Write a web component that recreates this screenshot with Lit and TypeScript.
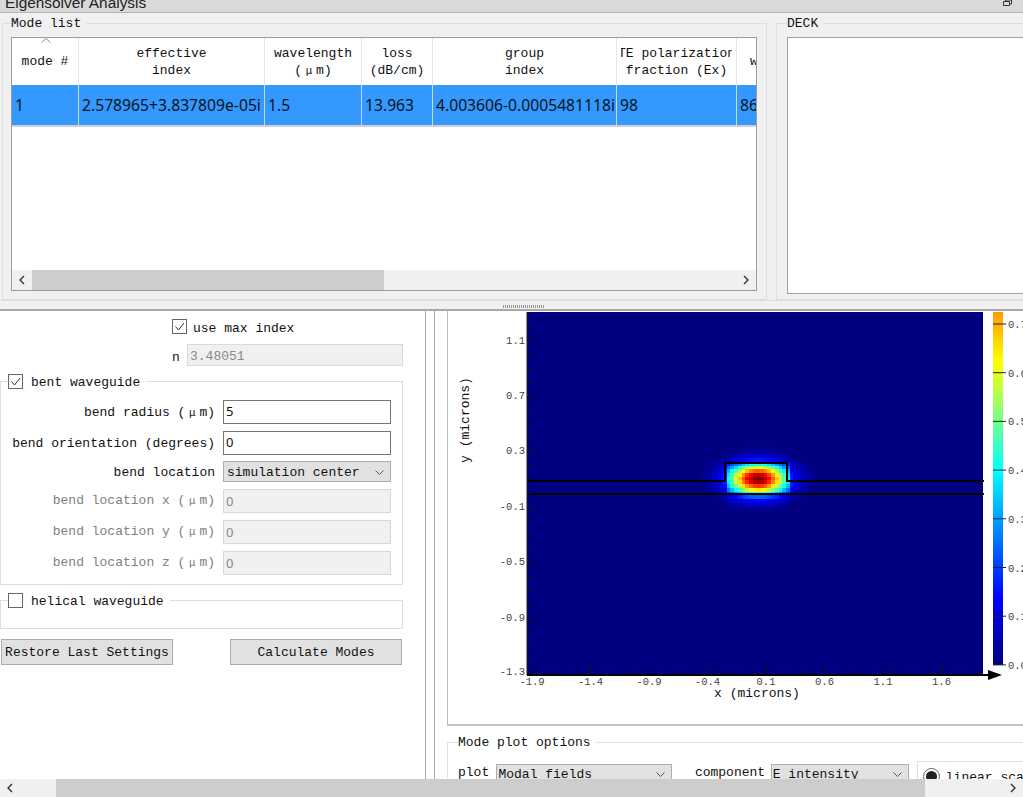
import { LitElement, html, svg, css } from 'lit';
import { customElement } from 'lit/decorators.js';

const COLUMNS = [
  { width: 67, head: ['mode #'], value: '1' },
  { width: 186, head: ['effective', 'index'], value: '2.578965+3.837809e-05i' },
  { width: 97, head: ['wavelength', '(μm)'], value: '1.5' },
  { width: 71, head: ['loss', '(dB/cm)'], value: '13.963' },
  { width: 184, head: ['group', 'index'], value: '4.003606-0.0005481118i' },
  { width: 120, head: ['TE polarization', 'fraction (Ex)'], value: '98' },
  { width: 20, head: ['w'], value: '86' },
];

const mu = html`<span class="mu">μ</span>`;

const check = (on: boolean) => html`<span class="check">
  ${on ? html`<svg width="13" height="13" viewBox="0 0 13 13"><path d="M2.5 6.5 5.5 10 11 3" fill="none" stroke="#333" stroke-width="1"/></svg>` : ''}
</span>`;

const chevron = html`<svg class="chev" width="9" height="5" viewBox="0 0 9 5"><path d="M0.5 0.5 4.5 4.5 8.5 0.5" fill="none" stroke="#555" stroke-width="1"/></svg>`;

const arrowLeft = html`<svg width="6" height="10" viewBox="0 0 6 10"><path d="M5 1 1 5 5 9" fill="none" stroke="#333" stroke-width="1.4"/></svg>`;
const arrowRight = html`<svg width="6" height="10" viewBox="0 0 6 10"><path d="M1 1 5 5 1 9" fill="none" stroke="#333" stroke-width="1.4"/></svg>`;

// standard jet map, v in 0..1
function jet(v: number) {
  const c = (x: number) => Math.round(255 * Math.max(0, Math.min(1, x)));
  const r = c(1.5 - Math.abs(4 * v - 3));
  const g = c(1.5 - Math.abs(4 * v - 2));
  const b = c(1.5 - Math.abs(4 * v - 1));
  return `rgb(${r},${g},${b})`;
}

function field(x: number, y: number) {
  const dx = x - 758;
  const dy = y - 479;
  let v = Math.exp(-(dx * dx) / (30 * 30) - (dy * dy) / (16 * 16));
  if (x < 725 || x > 789) v *= 0.55;
  if (y < 463) v *= 0.6;
  if (y > 494) v *= 0.8;
  return v;
}

function heatCells() {
  const cells = [];
  const size = 3.7;
  for (let y = 436; y < 524; y += size) {
    for (let x = 686; x < 832; x += size) {
      const v = field(x + size / 2, y + size / 2);
      if (v < 0.015) continue;
      cells.push(svg`<rect x=${x} y=${y} width=${size + 0.2} height=${size + 0.2} fill=${jet(v)}/>`);
    }
  }
  return cells;
}

function yAxis() {
  const out = [];
  const labels = ['1.1', '0.7', '0.3', '-0.1', '-0.5', '-0.9', '-1.3'];
  for (let i = -2; i < 27; i++) {
    const y = 341 + i * 13.88;
    if (y < 312 || y > 675) continue;
    const major = i % 4 === 0;
    out.push(svg`<line x1="527" x2=${major ? 536 : 532} y1=${y} y2=${y} stroke="#111"/>`);
  }
  labels.forEach((t, i) => {
    out.push(svg`<text class="tick" x="525" y=${343.5 + i * 55.4 - (i === 6 ? 1 : 0)} text-anchor="end">${t}</text>`);
  });
  return out;
}

function xAxis() {
  const out = [];
  const labels = ['-1.9', '-1.4', '-0.9', '-0.4', '0.1', '0.6', '1.1', '1.6'];
  for (let i = 0; i < 40; i++) {
    const x = 533 + i * 11.7;
    if (x > 980) break;
    out.push(svg`<line x1=${x} x2=${x} y1="675" y2=${i % 5 === 0 ? 667 : 671} stroke="#111"/>`);
  }
  labels.forEach((t, i) => {
    out.push(svg`<text class="tick" x=${532 + i * 58.5} y="685" text-anchor="middle">${t}</text>`);
  });
  return out;
}

function colorBar() {
  const ticks = ['0.7', '0.6', '0.5', '0.4', '0.3', '0.2', '0.1', '0.0'];
  return ticks.map((t, i) => {
    const y = 324 + i * 48.7;
    return svg`<line x1="993" x2="1006" y1=${y} y2=${y} stroke="#222"/>
      <text class="tick" x="1008" y=${y + 4}>${t}</text>`;
  });
}

@customElement('app-root')
export class AppRoot extends LitElement {
  static styles = css`
    :host {
      display: block;
      position: relative;
      width: 1023px;
      height: 797px;
      overflow: hidden;
      background: #f0f0f0;
      color: #111;
      font: 13px/17px 'Liberation Mono', monospace;
    }
    .titlebar {
      height: 12px;
      background: #d9d9d9;
      border-bottom: 1px solid #b4b4b4;
      padding-left: 5px;
      overflow: hidden;
      display: flex;
      justify-content: space-between;
      align-items: flex-end;
    }
    .titlebar span {
      font: 15.4px/16px 'Liberation Sans', sans-serif;
      color: #222;
      margin-bottom: 1px;
    }
    .titlebar svg {
      margin: 0 11px 6px 0;
    }
    .top {
      height: 287px;
      box-sizing: border-box;
      padding: 10px 0 0 2px;
      display: flex;
      gap: 9px;
    }
    .group {
      border: 1px solid #dedede;
      box-sizing: border-box;
    }
    .group-title {
      display: block;
      width: fit-content;
      height: 17px;
      margin: -9px 0 0 0;
      padding-right: 5px;
      background: #f0f0f0;
    }
    .mode-group {
      width: 765px;
      height: 277px;
      padding: 0 9px 0 8px;
    }
    .deck-group {
      flex: 1;
      margin-right: -10px;
      padding-left: 10px;
    }
    .deck-box {
      height: 255px;
      margin-top: 5px;
      background: #fff;
      border: 1px solid #a0a0a0;
    }
    .table {
      height: 254px;
      margin-top: 5px;
      box-sizing: border-box;
      background: #fff;
      border: 1px solid #9c9c9c;
      display: flex;
      flex-direction: column;
      overflow: hidden;
    }
    .thead,
    .trow {
      display: flex;
    }
    .thead {
      height: 47px;
    }
    .th {
      position: relative;
      box-sizing: border-box;
      flex: none;
      border-right: 1px solid #e6e6e6;
      padding: 0 4px;
      display: flex;
      flex-direction: column;
      justify-content: center;
      overflow: hidden;
    }
    .th:last-child {
      border: 0;
      padding: 0;
      align-items: flex-start;
    }
    .th:last-child div {
      margin-left: 13px;
      width: auto;
      overflow: visible;
    }
    .th div {
      display: flex;
      justify-content: center;
      white-space: pre;
      height: 17px;
      overflow: hidden;
    }
    .sort {
      position: absolute;
      left: 29px;
      top: 0;
    }
    .trow {
      height: 42px;
      background: #3399ff;
      border-bottom: 2px solid #d0d0d0;
      box-sizing: border-box;
    }
    .td {
      box-sizing: border-box;
      flex: none;
      padding-left: 3px;
      border-right: 1px solid #c4daf0;
      font: 15.7px/41px 'Noto Sans', sans-serif;
      color: #0a1420;
      white-space: nowrap;
      overflow: hidden;
    }
    .td:last-child {
      border: 0;
    }
    .spacer {
      flex: 1;
    }
    .hscroll {
      flex: none;
      display: flex;
      align-items: center;
      justify-content: space-between;
      background: #f0f0f0;
      position: relative;
    }
    .table .hscroll {
      height: 20px;
      padding: 0 7px;
    }
    .thumb {
      position: absolute;
      top: 0;
      bottom: 0;
      background: #cdcdcd;
    }
    .splitter {
      height: 11px;
      box-sizing: border-box;
      border-bottom: 2px solid #a9a9a9;
      border-top: 1px solid #dedede;
      display: flex;
      justify-content: center;
      padding: 4px 0 0 24px;
    }
    .grip {
      width: 42px;
      height: 3px;
      background: repeating-linear-gradient(90deg, #999 0 1px, transparent 1px 2px);
    }
    .bottom {
      height: 468px;
      display: flex;
      background: #fff;
      overflow: hidden;
    }
    .left {
      width: 426px;
      flex: none;
      box-sizing: border-box;
      padding-top: 8px;
      border-right: 1px solid #a9a9a9;
    }
    .check {
      width: 15px;
      height: 15px;
      box-sizing: border-box;
      border: 1px solid #666;
      background: #fff;
      display: inline-flex;
      flex: none;
    }
    .use-max {
      display: flex;
      align-items: center;
      gap: 6px;
      margin-left: 172px;
      height: 15px;
    }
    .use-max span:last-child {
      margin-top: 4px;
    }
    .n-row {
      display: flex;
      align-items: center;
      margin: 10px 0 0 172px;
      height: 22px;
    }
    .n-row label {
      width: 15px;
      margin-top: 4px;
    }
    .field {
      box-sizing: border-box;
      height: 100%;
      border: 1px solid #767676;
      background: #fff;
      padding-left: 2px;
      font: 13px/21px 'Noto Sans', sans-serif;
    }
    .field.off {
      background: #f0f0f0;
      border-color: #d9d9d9;
      color: #8a8a8a;
      line-height: 23px;
    }
    .n-row .field {
      width: 216px;
      font: 13px/23px 'Liberation Mono', monospace;
    }
    .bent {
      margin-top: 15px;
      width: 403px;
      height: 204px;
      background: #fff;
    }
    .helical {
      margin-top: 15px;
      width: 403px;
      height: 29px;
    }
    .box-title {
      display: flex;
      align-items: center;
      gap: 8px;
      width: fit-content;
      height: 15px;
      margin: -8px 0 0 7px;
      padding-right: 6px;
      background: #fff;
    }
    .box-title span:last-child {
      margin-top: 2px;
    }
    .rows {
      padding-top: 4px;
    }
    .row {
      display: flex;
      height: 24px;
      margin-top: 7px;
      gap: 8px;
    }
    .row.sel {
      height: 21px;
      margin-top: 6px;
    }
    .row label {
      width: 214px;
      text-align: right;
      line-height: 24px;
      white-space: nowrap;
    }
    .row.live label {
      line-height: 26px;
    }
    .row.dim label {
      color: #808080;
    }
    .row .field,
    .row .combo {
      width: 168px;
    }
    .mu {
      display: inline-block;
      width: 14px;
      text-align: center;
      font-size: 11px;
    }
    .combo {
      box-sizing: border-box;
      border: 1px solid #adadad;
      background: #e1e1e1;
      display: flex;
      align-items: center;
      justify-content: space-between;
      padding: 2px 6px 0 3px;
      white-space: nowrap;
      overflow: hidden;
    }
    .buttons {
      margin: 10px 0 0 1px;
      width: 401px;
      display: flex;
      justify-content: space-between;
    }
    .btn {
      box-sizing: border-box;
      width: 172px;
      height: 26px;
      border: 1px solid #adadad;
      background: #e1e1e1;
      font: 13px/26px 'Liberation Mono', monospace;
      text-align: center;
      color: #111;
      padding: 0;
    }
    .sash {
      width: 9px;
      flex: none;
      background: #fff;
      border-right: 1px solid #a9a9a9;
      box-sizing: border-box;
    }
    .right {
      flex: 1;
      min-width: 0;
      padding-left: 12px;
    }
    .plot {
      height: 415px;
      border-left: 1px solid #bcbcbc;
      border-bottom: 2px solid #c4c4c4;
      box-sizing: border-box;
    }
    .plot svg {
      display: block;
    }
    .plot text {
      font-family: 'Liberation Mono', monospace;
    }
    .plot .tick {
      font-size: 10.5px;
      fill: #444;
    }
    .plot .axis {
      font-size: 13px;
      fill: #111;
    }
    .options {
      margin-top: 16px;
      height: 60px;
      margin-right: -20px;
      border-color: #e2e2e2;
    }
    .options .group-title {
      background: #fff;
      margin-left: 10px;
      padding: 0 4px 0 0;
      width: fit-content;
    }
    .opt-row {
      display: flex;
      align-items: flex-start;
      margin: 13px 0 0 10px;
    }
    .opt-row > span {
      line-height: 18px;
    }
    .opt-row .combo {
      height: 24px;
      padding: 0 6px 4px 1px;
    }
    .radio-box {
      margin-left: 8px;
      border: 1px solid #e0e0e0;
      height: 40px;
      margin-top: -3px;
      padding: 6px 0 0 5px;
      width: 120px;
      display: flex;
      gap: 6px;
      align-items: flex-start;
      line-height: 20px;
    }
    .radio {
      width: 17px;
      height: 17px;
      flex: none;
      box-sizing: border-box;
      border: 1px solid #666;
      border-radius: 50%;
      display: flex;
      align-items: center;
      justify-content: center;
    }
    .radio::after {
      content: '';
      width: 11px;
      height: 11px;
      border-radius: 50%;
      background: #222;
    }
    .page-scroll {
      height: 18px;
      padding: 0 7px;
      background: #f0f0f0;
    }
  `;

  renderTable() {
    return html`<div class="table">
      <div class="thead">
        ${COLUMNS.map((c, i) => html`<div class="th" style="width:${c.width}px">
          ${i === 0
            ? html`<svg class="sort" width="10" height="5" viewBox="0 0 10 5"><path d="M0.5 4.5 5 0.5 9.5 4.5" fill="none" stroke="#888"/></svg>`
            : ''}
          ${c.head.map(line =>
            line === '(μm)' ? html`<div><span>(${mu}m)</span></div>` : html`<div><span>${line}</span></div>`
          )}
        </div>`)}
      </div>
      <div class="trow">
        ${COLUMNS.map(c => html`<div class="td" style="width:${c.width}px">${c.value}</div>`)}
      </div>
      <div class="spacer"></div>
      <div class="hscroll">
        <div class="thumb" style="left:20px;width:352px"></div>
        ${arrowLeft}
        ${arrowRight}
      </div>
    </div>`;
  }

  renderPlot() {
    return svg`<svg width="575" height="413" viewBox="448 311 575 413">
      <rect x="527" y="312" width="456" height="363" fill="#000080"/>
      <g shape-rendering="crispEdges">${heatCells()}</g>
      <path d="M527 481H725V463H787V481H984M527 494H984" fill="none" stroke="#000" stroke-width="2"/>
      <line x1="527" x2="527" y1="312" y2="675" stroke="#222"/>
      ${yAxis()}
      ${xAxis()}
      <line x1="527" x2="990" y1="675" y2="675" stroke="#000" stroke-width="2"/>
      <path d="M988 670 1002 675 988 680Z" fill="#000"/>
      <text class="axis" x="757" y="697" text-anchor="middle">x (microns)</text>
      <text class="axis" transform="translate(469 420) rotate(-90)" text-anchor="middle">y (microns)</text>
      <defs>
        <linearGradient id="bar" x1="0" x2="0" y1="0" y2="1">
          <stop offset="0" stop-color="#ff9a00"/>
          <stop offset="0.14" stop-color="#ffff00"/>
          <stop offset="0.45" stop-color="#00ffff"/>
          <stop offset="0.81" stop-color="#0000ff"/>
          <stop offset="1" stop-color="#000080"/>
        </linearGradient>
      </defs>
      <rect x="993" y="312" width="10" height="353" fill="url(#bar)"/>
      ${colorBar()}
    </svg>`;
  }

  render() {
    return html`
      <div class="titlebar">
        <span>Eigensolver Analysis</span>
        <svg width="9" height="6" viewBox="0 0 9 6"><path d="M0.5 1.5H6.5V5.5H0.5ZM2.5 1.5V0H8.5V4H6.5" fill="none" stroke="#333"/></svg>
      </div>
      <div class="top">
        <div class="group mode-group">
          <span class="group-title">Mode list</span>
          ${this.renderTable()}
        </div>
        <div class="group deck-group">
          <span class="group-title">DECK</span>
          <div class="deck-box"></div>
        </div>
      </div>
      <div class="splitter"><div class="grip"></div></div>
      <div class="bottom">
        <div class="left">
          <div class="use-max">${check(true)}<span>use max index</span></div>
          <div class="n-row"><label>n</label><div class="field off">3.48051</div></div>
          <div class="group bent">
            <div class="box-title">${check(true)}<span>bent waveguide</span></div>
            <div class="rows">
              <div class="row live"><label>bend radius (${mu}m)</label><div class="field">5</div></div>
              <div class="row live"><label>bend orientation (degrees)</label><div class="field">0</div></div>
              <div class="row sel"><label>bend location</label><div class="combo"><span>simulation center</span>${chevron}</div></div>
              <div class="row dim"><label>bend location x (${mu}m)</label><div class="field off">0</div></div>
              <div class="row dim"><label>bend location y (${mu}m)</label><div class="field off">0</div></div>
              <div class="row dim"><label>bend location z (${mu}m)</label><div class="field off">0</div></div>
            </div>
          </div>
          <div class="group helical">
            <div class="box-title">${check(false)}<span>helical waveguide</span></div>
          </div>
          <div class="buttons">
            <button class="btn">Restore Last Settings</button>
            <button class="btn">Calculate Modes</button>
          </div>
        </div>
        <div class="sash"></div>
        <div class="right">
          <div class="plot">${this.renderPlot()}</div>
          <div class="group options">
            <span class="group-title">Mode plot options</span>
            <div class="opt-row">
              <span style="width:39px">plot</span>
              <div class="combo" style="width:178px"><span>Modal fields</span>${chevron}</div>
              <span style="width:77px;margin-left:23px">component</span>
              <div class="combo" style="width:140px"><span>E intensity</span>${chevron}</div>
              <div class="radio-box"><span class="radio"></span><span>linear scale</span></div>
            </div>
          </div>
        </div>
      </div>
      <div class="hscroll page-scroll">
        <div class="thumb" style="left:56px;width:869px"></div>
        ${arrowLeft}
        ${arrowRight}
      </div>
    `;
  }
}
